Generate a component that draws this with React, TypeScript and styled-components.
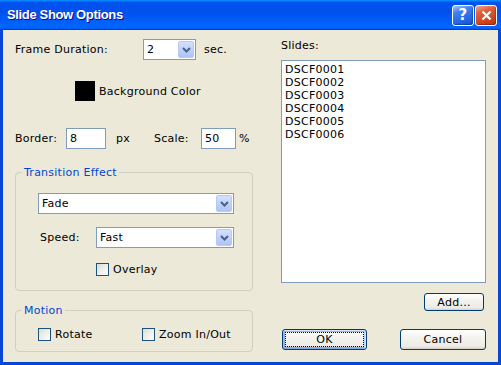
import React from 'react';
import styled, { createGlobalStyle } from 'styled-components';

const GlobalStyle = createGlobalStyle`
  html, body {
    margin: 0;
    padding: 0;
  }
  body {
    font-family: "DejaVu Sans", Tahoma, sans-serif;
    font-size: 11px;
    letter-spacing: 0.25px;
    color: #000;
  }
  * {
    box-sizing: border-box;
  }
`;

const Window = styled.div`
  width: 501px;
  height: 365px;
  display: flex;
  flex-direction: column;
  background: #0846d8;
`;

const TitleBar = styled.div`
  height: 30px;
  flex: none;
  display: flex;
  align-items: center;
  padding: 0 4px 1px 7px;
  background: linear-gradient(
    180deg,
    #0997ff 0%,
    #0053ee 8%,
    #0050ee 40%,
    #0066ff 88%,
    #0066ff 93%,
    #005bff 95%,
    #003dd7 96%,
    #003dd7 100%
  );
`;

const Title = styled.span`
  font-family: "Liberation Sans", Arial, sans-serif;
  font-weight: bold;
  font-size: 13px;
  letter-spacing: -0.35px;
  color: #fff;
  text-shadow: 1px 1px #0f1089;
`;

const CaptionButtons = styled.div`
  margin-left: auto;
  display: flex;
  gap: 1px;
  padding-top: 1px;
`;

const CaptionButton = styled.div<{ $variant: 'help' | 'close' }>`
  width: 22px;
  height: 21px;
  border: 1px solid #fff;
  border-radius: 3px;
  display: flex;
  align-items: center;
  justify-content: center;
  color: #fff;
  font-family: "DejaVu Sans", sans-serif;
  font-weight: bold;
  font-size: 15px;
  background: ${({ $variant }) =>
    $variant === 'close'
      ? 'linear-gradient(160deg, #f2a78f 0%, #e0603a 30%, #cf4317 75%, #b8360c 100%)'
      : 'linear-gradient(160deg, #a7c4f7 0%, #3f82f0 30%, #2163e0 75%, #1752c9 100%)'};
  box-shadow: inset -1px -1px 1px rgba(0, 0, 0, 0.25);
`;

const Body = styled.div`
  flex: 1;
  margin: 0 3px 3px;
  background: #ece9d8;
  display: grid;
  grid-template-columns: 238px 205px;
  column-gap: 28px;
  padding: 9px 12px 0;
`;

const Column = styled.div`
  display: flex;
  flex-direction: column;
`;

const Row = styled.div<{ $top?: number; $indent?: number }>`
  display: flex;
  align-items: center;
  margin-top: ${({ $top }) => $top ?? 0}px;
  padding-left: ${({ $indent }) => $indent ?? 0}px;
`;

const Label = styled.span<{ $width?: number; $gap?: number }>`
  flex: none;
  white-space: nowrap;
  line-height: 13px;
  width: ${({ $width }) => ($width ? `${$width}px` : 'auto')};
  margin-left: ${({ $gap }) => $gap ?? 0}px;
`;

const Select = styled.div<{ $width: number }>`
  width: ${({ $width }) => $width}px;
  height: 21px;
  flex: none;
  border: 1px solid #7f9db9;
  background: #fff;
  display: flex;
  align-items: stretch;
  padding: 1px 1px 1px 3px;
`;

const SelectValue = styled.span`
  flex: 1;
  display: flex;
  align-items: center;
`;

const SelectArrow = styled.span`
  width: 16px;
  flex: none;
  border-radius: 2px;
  border: 1px solid #b5c8f6;
  background: linear-gradient(180deg, #d4e1fd 0%, #c0d3fb 45%, #adc4f6 100%);
  display: flex;
  align-items: center;
  justify-content: center;
`;

const TextInput = styled.input<{ $width: number }>`
  width: ${({ $width }) => $width}px;
  height: 21px;
  flex: none;
  border: 1px solid #7f9db9;
  background: #fff;
  padding: 0 0 0 3px;
  margin: 0;
  font: inherit;
  letter-spacing: inherit;
  color: #000;
  outline: none;
`;

const Swatch = styled.span`
  width: 20px;
  height: 20px;
  flex: none;
  background: #000;
  margin-right: 4px;
`;

const Group = styled.fieldset<{ $top: number }>`
  margin: ${({ $top }) => $top}px 0 0;
  padding: 0;
  min-width: 0;
  border: 1px solid #d0d0bf;
  border-radius: 4px;
`;

const Legend = styled.legend`
  color: #0046d5;
  line-height: 13px;
  padding: 0 2px;
  margin-left: 6px;
`;

const GroupBody = styled.div<{ $pt: number; $pb: number }>`
  display: flex;
  flex-direction: column;
  padding: ${({ $pt }) => $pt}px 17px ${({ $pb }) => $pb}px 22px;
`;

const CheckItem = styled.label<{ $width?: number }>`
  display: flex;
  align-items: center;
  gap: 4px;
  line-height: 13px;
  width: ${({ $width }) => ($width ? `${$width}px` : 'auto')};
`;

const CheckBox = styled.span`
  width: 13px;
  height: 13px;
  flex: none;
  border: 1px solid #1c5180;
  background: linear-gradient(135deg, #dcdcd7 0%, #f2f2ef 60%, #fff 100%);
`;

const ListBox = styled.div`
  height: 223px;
  margin-top: 8px;
  border: 1px solid #7f9db9;
  background: #fff;
  padding: 2px 3px;
`;

const ListItem = styled.div`
  line-height: 13px;
`;

const Button = styled.button<{ $width: number; $height?: number; $default?: boolean }>`
  width: ${({ $width }) => $width}px;
  height: ${({ $height }) => $height ?? 21}px;
  flex: none;
  margin: 0;
  padding: 0;
  font: inherit;
  letter-spacing: inherit;
  color: #000;
  border: 1px solid #003c74;
  border-radius: 3px;
  background: linear-gradient(180deg, #fff 0%, #f4f3ee 40%, #ecebe6 86%, #d6d0c5 100%);
  box-shadow: ${({ $default }) =>
    $default
      ? 'inset -1px 1px #cee7ff, inset 1px 2px #98b8ea, inset -2px 2px #bcd4f6, inset 1px -1px #89ade4, inset 2px -2px #89ade4'
      : 'none'};
  outline: ${({ $default }) => ($default ? '1px dotted #000' : 'none')};
  outline-offset: -4px;
`;

const AddRow = styled.div`
  display: flex;
  justify-content: flex-end;
  margin-top: 10px;
  padding-right: 2px;
`;

const ButtonRow = styled.div`
  display: flex;
  justify-content: space-between;
  margin-top: 18px;
  padding-left: 1px;
`;

const Chevron = () => (
  <svg width="9" height="6" viewBox="0 0 9 6">
    <path d="M1 1 L4.5 4.5 L8 1" fill="none" stroke="#4d6185" strokeWidth="2" />
  </svg>
);

const DropDown: React.FC<{ width: number; value: string }> = ({ width, value }) => (
  <Select $width={width}>
    <SelectValue>{value}</SelectValue>
    <SelectArrow>
      <Chevron />
    </SelectArrow>
  </Select>
);

const slides = ['DSCF0001', 'DSCF0002', 'DSCF0003', 'DSCF0004', 'DSCF0005', 'DSCF0006'];

export default function App() {
  return (
    <>
      <GlobalStyle />
      <Window>
        <TitleBar>
          <Title>Slide Show Options</Title>
          <CaptionButtons>
            <CaptionButton $variant="help">?</CaptionButton>
            <CaptionButton $variant="close">
              <svg width="11" height="11" viewBox="0 0 11 11">
                <path d="M1.5 1.5 L9.5 9.5 M9.5 1.5 L1.5 9.5" stroke="#fff" strokeWidth="2.2" />
              </svg>
            </CaptionButton>
          </CaptionButtons>
        </TitleBar>

        <Body>
          <Column>
            <Row>
              <Label $width={128}>Frame Duration:</Label>
              <DropDown width={53} value="2" />
              <Label $gap={8}>sec.</Label>
            </Row>

            <Row $top={21} $indent={60}>
              <Swatch />
              <Label>Background Color</Label>
            </Row>

            <Row $top={27}>
              <Label $width={51}>Border:</Label>
              <TextInput $width={40} value="8" readOnly />
              <Label $width={38} $gap={10}>px</Label>
              <Label $width={47}>Scale:</Label>
              <TextInput $width={35} value="50" readOnly />
              <Label $gap={3}>%</Label>
            </Row>

            <Group $top={17}>
              <Legend>Transition Effect</Legend>
              <GroupBody $pt={14} $pb={14}>
                <DropDown width={196} value="Fade" />
                <Row $top={13} $indent={2}>
                  <Label $width={56}>Speed:</Label>
                  <DropDown width={138} value="Fast" />
                </Row>
                <Row $top={15} $indent={58}>
                  <CheckItem>
                    <CheckBox />
                    Overlay
                  </CheckItem>
                </Row>
              </GroupBody>
            </Group>

            <Group $top={13}>
              <Legend>Motion</Legend>
              <GroupBody $pt={11} $pb={10}>
                <Row>
                  <CheckItem $width={104}>
                    <CheckBox />
                    Rotate
                  </CheckItem>
                  <CheckItem>
                    <CheckBox />
                    Zoom In/Out
                  </CheckItem>
                </Row>
              </GroupBody>
            </Group>
          </Column>

          <Column>
            <Label>Slides:</Label>
            <ListBox>
              {slides.map((s) => (
                <ListItem key={s}>{s}</ListItem>
              ))}
            </ListBox>
            <AddRow>
              <Button $width={60} $height={18}>Add...</Button>
            </AddRow>
            <ButtonRow>
              <Button $width={85} $default>OK</Button>
              <Button $width={86}>Cancel</Button>
            </ButtonRow>
          </Column>
        </Body>
      </Window>
    </>
  );
}
